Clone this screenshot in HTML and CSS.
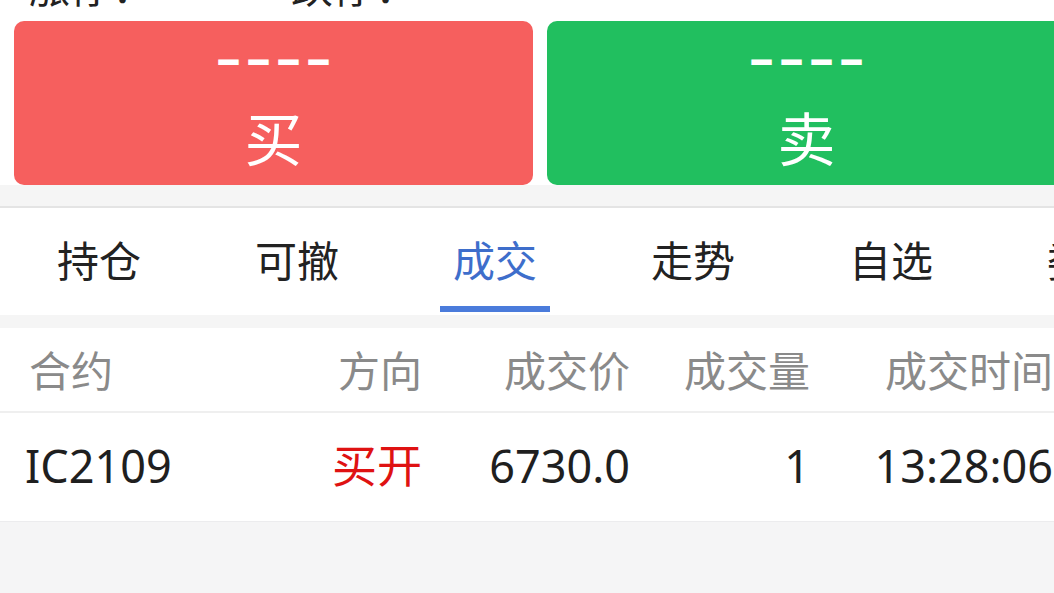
FILE: index.html
```html
<!DOCTYPE html>
<html lang="zh-CN">
<head>
<meta charset="utf-8">
<title>成交</title>
<link rel="stylesheet" href="styles.css">
</head>
<body>
<div class="page">
  <section class="quote">
    <div class="limits">
      <span class="limit">涨停：</span>
      <span class="limit">跌停：</span>
    </div>
    <div class="actions">
      <button class="trade buy" type="button">
        <span class="price">––––</span>
        <span class="label">买</span>
      </button>
      <button class="trade sell" type="button">
        <span class="price">––––</span>
        <span class="label">卖</span>
      </button>
    </div>
  </section>

  <div class="spacer"></div>

  <nav class="tabs">
    <div class="tab"><span class="tab-label">持仓</span><span class="tab-bar"></span></div>
    <div class="tab"><span class="tab-label">可撤</span><span class="tab-bar"></span></div>
    <div class="tab active"><span class="tab-label">成交</span><span class="tab-bar"></span></div>
    <div class="tab"><span class="tab-label">走势</span><span class="tab-bar"></span></div>
    <div class="tab"><span class="tab-label">自选</span><span class="tab-bar"></span></div>
    <div class="tab"><span class="tab-label">委托</span><span class="tab-bar"></span></div>
  </nav>

  <div class="gap"></div>

  <div class="table">
    <div class="row head">
      <span class="cell first">合约</span>
      <span class="cell num">方向</span>
      <span class="cell num">成交价</span>
      <span class="cell num">成交量</span>
      <span class="cell num">成交时间</span>
    </div>
    <div class="row data">
      <span class="cell first">IC2109</span>
      <span class="cell num dir-buy">买开</span>
      <span class="cell num">6730.0</span>
      <span class="cell num">1</span>
      <span class="cell num">13:28:06</span>
    </div>
  </div>
</div>
</body>
</html>
```

FILE: styles.css
```css
html {
  overflow: hidden;
  background: #f5f5f6;
}

body {
  margin: 0;
  font-family: "Noto Sans", "Noto Sans CJK SC", sans-serif;
  color: #1f1f1f;
}

.page {
  width: 1080px;
}

.quote {
  background: #ffffff;
  padding: 0 14px;
}

.limits {
  display: flex;
  height: 21px;
  padding-left: 14px;
}

.limit {
  width: 263px;
  font-size: 42px;
  line-height: 42px;
  margin-top: -34px;
  color: #222222;
}

.actions {
  display: flex;
  gap: 14px;
}

.trade {
  flex: 0 0 519px;
  height: 164px;
  border: 0;
  border-radius: 10px;
  padding: 12px 0 0;
  display: flex;
  flex-direction: column;
  align-items: center;
  color: #ffffff;
  font-family: "Noto Sans", "Noto Sans CJK SC", sans-serif;
}

.buy {
  background: #f65f5e;
}

.sell {
  background: #21bf5f;
}

.price {
  font-size: 48px;
  line-height: 48px;
  font-weight: 700;
  letter-spacing: 6px;
  padding-left: 6px;
}

.label {
  margin-top: 29px;
  font-size: 58px;
  line-height: 58px;
}

.spacer {
  height: 21px;
  background: #f5f5f5;
}

.tabs {
  display: flex;
  background: #ffffff;
  border-top: 2px solid #e4e4e4;
  height: 107px;
}

.tab {
  flex: 0 0 198px;
  display: flex;
  flex-direction: column;
  align-items: center;
  padding-top: 32px;
  box-sizing: border-box;
}

.tab-label {
  font-size: 42px;
  line-height: 42px;
  color: #222222;
}

.tab-bar {
  width: 110px;
  height: 6px;
  margin-top: 24px;
  background: transparent;
}

.tab.active .tab-label {
  color: #3e6ecb;
}

.tab.active .tab-bar {
  background: #4a7bdb;
}

.gap {
  height: 13px;
  background: #f5f5f5;
}

.table {
  background: #ffffff;
}

.row {
  display: grid;
  grid-template-columns: 225px 197px 208px 180px 243px;
  width: 1080px;
}

.head {
  padding: 22px 0 19px;
  border-bottom: 2px solid #efefef;
  font-size: 42px;
  line-height: 42px;
  color: #8a8a8a;
}

.data {
  padding: 30px 0 33px;
  border-bottom: 1px solid #ececee;
  font-size: 45px;
  line-height: 45px;
  color: #1f1f1f;
}

.cell {
  white-space: nowrap;
}

.head .first {
  padding-left: 29px;
}

.data .first {
  padding-left: 25px;
}

.num {
  text-align: right;
}

.dir-buy {
  color: #df1212;
}
```
